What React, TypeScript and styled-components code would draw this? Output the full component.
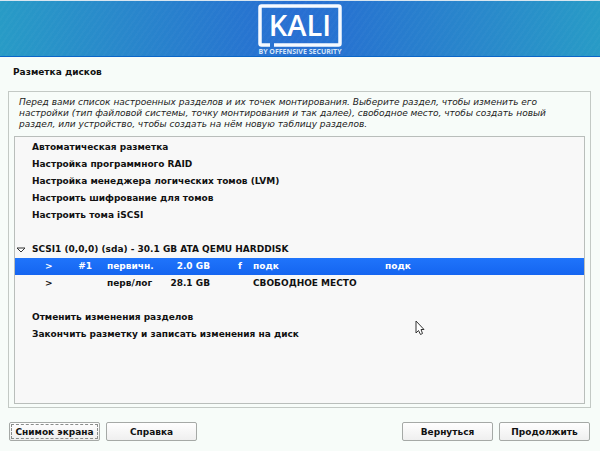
import React from "react";
import styled, { createGlobalStyle, css } from "styled-components";

const GlobalStyle = createGlobalStyle`
  * { box-sizing: border-box; }
  body {
    margin: 0;
    background: #f7fcf9;
    color: #111;
    font-family: "DejaVu Sans", sans-serif;
    font-size: 9px;
  }
`;

const Page = styled.div`
  display: flex;
  flex-direction: column;
  min-height: 100vh;
`;

const Banner = styled.header`
  display: flex;
  justify-content: center;
  height: 57px;
  padding-top: 3px;
  border-top: 1px solid #d9e6f0;
  border-bottom: 1px solid #0a66c8;
  background:
    repeating-linear-gradient(125deg, rgba(255, 255, 255, 0.02) 0 2px, transparent 2px 5px),
    linear-gradient(90deg, #289bc6 0%, #2988cb 20%, #2774d0 42%, #286fd2 50%, #2774d0 58%, #2988cb 80%, #289bc6 100%);
`;

const Logo = styled.svg`
  display: block;
  width: 84px;
  height: 52px;
  overflow: visible;
`;

const Title = styled.h1`
  margin: 0;
  padding: 9px 13px 12px;
  font-size: 9px;
  line-height: 13px;
  font-weight: bold;
`;

const Panel = styled.main`
  flex: 1;
  display: flex;
  flex-direction: column;
  margin: 0 9px 0 8px;
  padding: 5px 5px 3px;
  border: 1px solid #c3c9c5;
`;

const Description = styled.p`
  margin: 0 4px 6px 5px;
  max-width: 536px;
  font-size: 9px;
  line-height: 11px;
  font-style: italic;
  color: #222;
`;

const ListBox = styled.div`
  flex: 1;
  border: 1px solid #b9bebb;
  background: #f8f8f8;
  padding-top: 2px;
`;

const Tree = styled.table`
  width: 100%;
  table-layout: fixed;
  border-collapse: collapse;
  font-weight: bold;
  line-height: 17px;
`;

const Row = styled.tr<{ $selected?: boolean }>`
  height: 17px;
  ${(p) =>
    p.$selected &&
    css`
      background: linear-gradient(#1f74fb, #1565f0);
      color: #fff;
    `}
`;

const Cell = styled.td<{ $endGap?: number }>`
  padding: 0 ${(p) => p.$endGap ?? 0}px 0 0;
  white-space: nowrap;
  text-align: ${(p) => (p.$endGap ? "right" : "left")};
`;

const Column = styled.col<{ $width?: number }>`
  width: ${(p) => (p.$width ? `${p.$width}px` : "auto")};
`;

const Expander = styled.button`
  display: block;
  width: 12px;
  height: 17px;
  padding: 0;
  border: 0;
  background: none;

  svg { display: block; margin-left: 1px; }
`;

const Footer = styled.footer`
  display: flex;
  gap: 6px;
  padding: 14px 10px 10px 9px;
`;

const Spacer = styled.div`
  flex: 1;
`;

const Button = styled.button<{ $focused?: boolean }>`
  width: 91px;
  height: 19px;
  padding: 1px 0 0;
  border: 1px solid #a5a9a6;
  border-radius: 2px;
  background: linear-gradient(#fefefe, #efefef);
  color: #111;
  font: bold 9px/16px "DejaVu Sans", sans-serif;
  white-space: nowrap;
  ${(p) =>
    p.$focused &&
    css`
      outline: 1px dashed #8a8d8b;
      outline-offset: -3px;
    `}
`;

const Pointer = styled.svg`
  position: fixed;
  left: 415px;
  top: 320px;
  pointer-events: none;
`;

type Partition = {
  number: string;
  kind: string;
  size: string;
  flag: string;
  use: string;
  mount: string;
  selected?: boolean;
};

const setupActions = [
  "Автоматическая разметка",
  "Настройка программного RAID",
  "Настройка менеджера логических томов (LVM)",
  "Настроить шифрование для томов",
  "Настроить тома iSCSI",
];

const partitions: Partition[] = [
  { number: "#1", kind: "первичн.", size: "2.0 GB", flag: "f", use: "подк", mount: "подк", selected: true },
  { number: "", kind: "перв/лог", size: "28.1 GB", flag: "", use: "СВОБОДНОЕ МЕСТО", mount: "" },
];

const finalActions = ["Отменить изменения разделов", "Закончить разметку и записать изменения на диск"];

const columnWidths = [17, 13, 20, 42, 55, 76, 15, 132];

function ActionRow({ label }: { label?: string }) {
  return (
    <Row>
      <Cell />
      <Cell colSpan={8}>{label}</Cell>
    </Row>
  );
}

function KaliLogo() {
  return (
    <Logo viewBox="0 0 84 52" role="img" aria-label="KALI by Offensive Security">
      <path
        d="M12 41H3.5Q2 41 2 39.500V3.500Q2 2 3.500 2H80.500Q82 2 82 3.500V39.500Q82 41 80.500 41H16"
        fill="none"
        stroke="#f6faff"
        strokeWidth="3.5"
      />
      <text x="42" y="32" textAnchor="middle" fontFamily="Open Sans" fontSize="29" fontWeight="600" fill="#fff">
        KALI
      </text>
      <text x="42" y="50" textAnchor="middle" fontFamily="Open Sans" fontSize="7" fontWeight="700" fill="#d5e5f8">
        BY OFFENSIVE SECURITY
      </text>
    </Logo>
  );
}

export default function App() {
  return (
    <>
      <GlobalStyle />
      <Page>
        <Banner>
          <KaliLogo />
        </Banner>
        <Title>Разметка дисков</Title>
        <Panel>
          <Description>
            Перед вами список настроенных разделов и их точек монтирования. Выберите раздел, чтобы изменить его
            настройки (тип файловой системы, точку монтирования и так далее), свободное место, чтобы создать новый
            раздел, или устройство, чтобы создать на нём новую таблицу разделов.
          </Description>
          <ListBox>
            <Tree aria-label="Разметка дисков">
              <colgroup>
                {columnWidths.map((width, i) => (
                  <Column key={i} $width={width} />
                ))}
                <Column />
              </colgroup>
              <tbody>
                {setupActions.map((label) => (
                  <ActionRow key={label} label={label} />
                ))}
                <ActionRow />
                <Row>
                  <Cell>
                    <Expander type="button" aria-label="SCSI1" aria-expanded="true">
                      <svg width="10" height="6" viewBox="0 0 10 6">
                        <path d="M1 1H9L5 5Z" fill="#fff" stroke="#333" strokeWidth="1" />
                      </svg>
                    </Expander>
                  </Cell>
                  <Cell colSpan={8}>SCSI1 (0,0,0) (sda) - 30.1 GB ATA QEMU HARDDISK</Cell>
                </Row>
                {partitions.map((p) => (
                  <Row key={p.kind} $selected={p.selected} aria-selected={!!p.selected}>
                    <Cell />
                    <Cell />
                    <Cell>&gt;</Cell>
                    <Cell $endGap={15}>{p.number}</Cell>
                    <Cell>{p.kind}</Cell>
                    <Cell $endGap={28}>{p.size}</Cell>
                    <Cell>{p.flag}</Cell>
                    <Cell>{p.use}</Cell>
                    <Cell>{p.mount}</Cell>
                  </Row>
                ))}
                <ActionRow />
                {finalActions.map((label) => (
                  <ActionRow key={label} label={label} />
                ))}
              </tbody>
            </Tree>
          </ListBox>
        </Panel>
        <Footer>
          <Button type="button" $focused>Снимок экрана</Button>
          <Button type="button">Справка</Button>
          <Spacer />
          <Button type="button">Вернуться</Button>
          <Button type="button">Продолжить</Button>
        </Footer>
      </Page>
      <Pointer width="10" height="16" viewBox="0 0 10 16" aria-hidden="true">
        <path d="M1 1V13L3.500 10.500L5.500 14.500L7.500 13.500L6 9.500H9Z" fill="#fff" stroke="#333" strokeWidth="1" />
      </Pointer>
    </>
  );
}
